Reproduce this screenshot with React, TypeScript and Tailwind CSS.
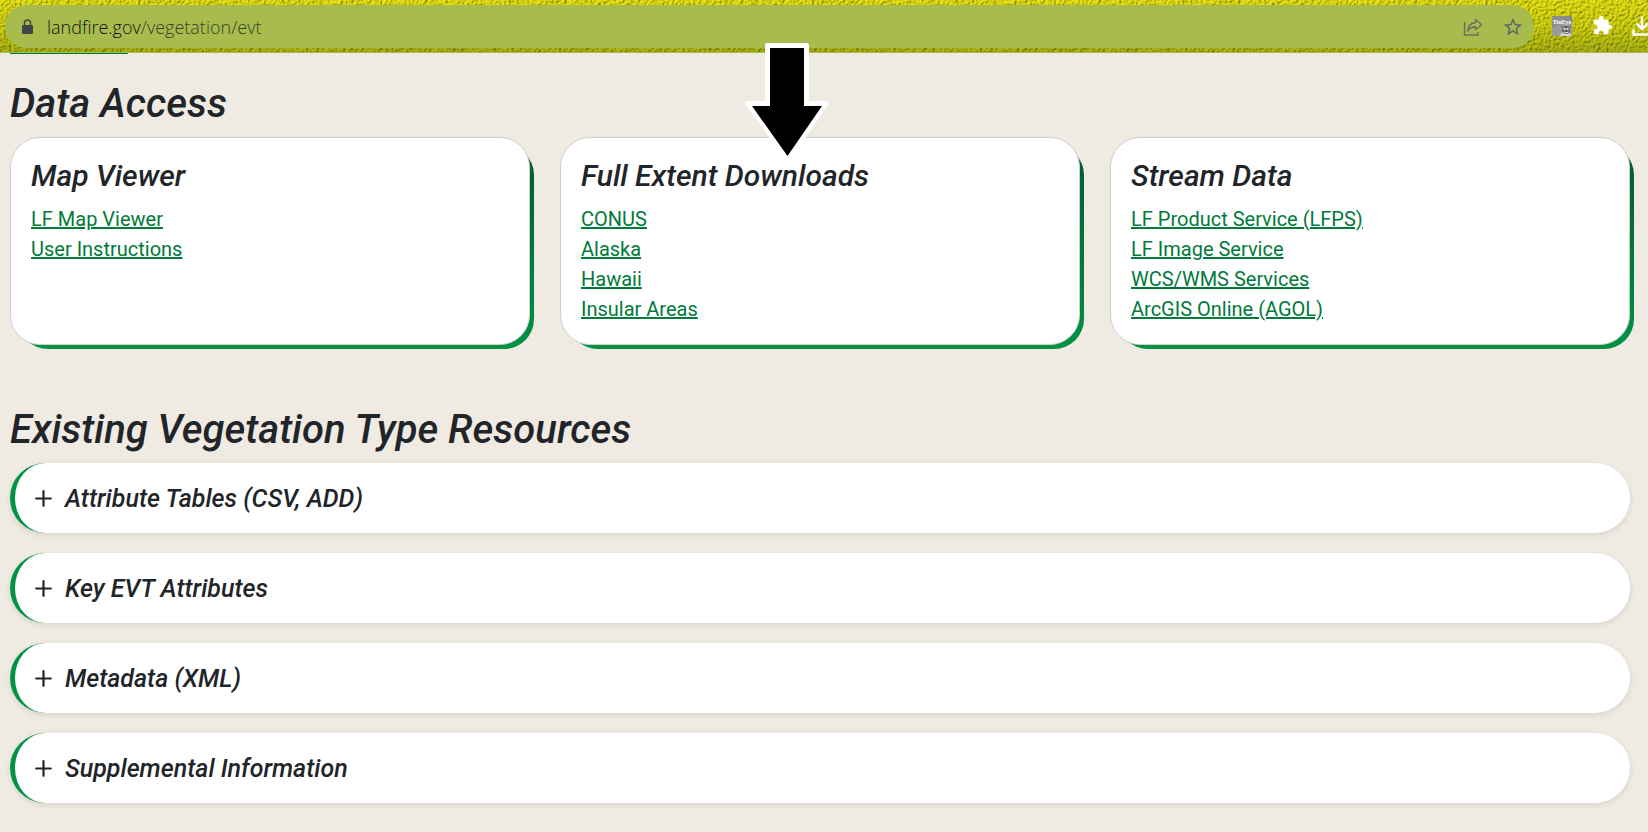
import React from "react";

type LinkCard = { title: string; links: string[] };

const cards: LinkCard[] = [
  { title: "Map Viewer", links: ["LF Map Viewer", "User Instructions"] },
  { title: "Full Extent Downloads", links: ["CONUS", "Alaska", "Hawaii", "Insular Areas"] },
  {
    title: "Stream Data",
    links: ["LF Product Service (LFPS)", "LF Image Service", "WCS/WMS Services", "ArcGIS Online (AGOL)"],
  },
];

const resources = ["Attribute Tables (CSV, ADD)", "Key EVT Attributes", "Metadata (XML)", "Supplemental Information"];

function Texture() {
  return (
    <svg className="absolute inset-0 -z-10 h-full w-full" aria-hidden="true">
      <defs>
        <linearGradient id="shade" x1="0" y1="0" x2="0" y2="1">
          <stop offset="0" stopColor="#e6e314" />
          <stop offset="0.5" stopColor="#d2d40f" />
          <stop offset="1" stopColor="#a9b312" />
        </linearGradient>
        <filter id="grain" x="0" y="0" width="100%" height="100%" colorInterpolationFilters="sRGB">
          <feTurbulence type="fractalNoise" baseFrequency="0.38" numOctaves="2" seed="4" result="n" />
          <feDiffuseLighting in="n" surfaceScale="1.2" diffuseConstant="1.12" lightingColor="#ffffff" result="l">
            <feDistantLight azimuth="225" elevation="56" />
          </feDiffuseLighting>
          <feBlend in="SourceGraphic" in2="l" mode="multiply" />
        </filter>
      </defs>
      <rect width="100%" height="100%" fill="url(#shade)" filter="url(#grain)" />
    </svg>
  );
}

function TinEye() {
  return (
    <svg width="20" height="20" viewBox="0 0 20 20" aria-hidden="true">
      <rect width="20" height="20" fill="#8c8c8c" />
      <path d="M0 12 Q8 7 20 8 V20 H0Z" fill="#9b9b9b" />
      <text x="10" y="8" textAnchor="middle" fontSize="6" fontWeight="700" fill="#ffffff" fontFamily="Liberation Serif, serif">
        TinEye
      </text>
      <path d="M8 20 L9 17 L12 16 L17 17 L20 20Z" fill="#d5d5d5" />
      <ellipse cx="14" cy="14" rx="4" ry="4" fill="#5c5c5c" />
      <circle cx="12.500" cy="13" r="1.300" fill="#d8d8d8" />
      <circle cx="15.600" cy="13" r="1.300" fill="#d8d8d8" />
      <path d="M11.500 16 Q14 18 16.500 16" stroke="#f0f0f0" fill="none" />
      <path d="M10 11 L9 10 M18 11 L19 10" stroke="#444444" />
    </svg>
  );
}

function Toolbar() {
  return (
    <header className="relative isolate flex h-[53px] items-start overflow-hidden border-b border-[#a7bc4d] pt-[5px] pl-[5px]">
      <Texture />
      <div className="flex h-[43px] min-w-0 flex-1 items-center rounded-full bg-[#a7bc4d] pr-[5px] pl-4 text-[#5f6368]">
        <svg width="13" height="16" viewBox="0 0 13 16" className="shrink-0" aria-hidden="true">
          <rect x="1" y="6" width="11" height="9" rx="1" fill="#414449" />
          <path d="M3.500 7V4a3 3 0 0 1 6 0v3" stroke="#414449" strokeWidth="1.500" fill="none" />
        </svg>
        <a
          href="#evt"
          aria-label="Page address"
          className="ml-[13px] min-w-0 flex-1 truncate font-['Open_Sans',sans-serif] text-[18px] leading-6 font-light text-[#3c4128]"
        >
          <span className="text-[#111214]">landfire.gov</span>/vegetation/evt
        </a>
        <button type="button" aria-label="Share this page" className="flex h-8 w-8 items-center justify-center">
          <svg width="20" height="18" viewBox="0 0 20 18" fill="none" stroke="#686d5f" strokeWidth="1.400" aria-hidden="true">
            <path d="M1.500 4v13h13.500v-3" />
            <path d="M12.500 1.500 18.700 6.700 12.500 11.500V8.700C9 8.700 6.300 10 4.800 13 5.200 8 8 4.800 12.500 4.500z" strokeLinejoin="round" />
          </svg>
        </button>
        <button type="button" aria-label="Bookmark this page" className="ml-2 flex h-8 w-8 items-center justify-center">
          <svg width="22" height="22" viewBox="0 0 24 24" fill="#5f6368" aria-hidden="true">
            <path d="M22 9.24l-7.19-.62L12 2 9.19 8.63 2 9.24l5.46 4.73L5.82 21 12 17.27 18.18 21l-1.63-7.03L22 9.24zM12 15.4l-3.76 2.27 1-4.28-3.32-2.88 4.38-.38L12 6.1l1.71 4.04 4.38.38-3.32 2.88 1 4.28L12 15.4z" />
          </svg>
        </button>
      </div>
      <div className="-mr-[10px] ml-3 flex h-[41px] items-center gap-2">
        <button type="button" aria-label="TinEye" className="flex h-8 w-8 items-center justify-center">
          <TinEye />
        </button>
        <button type="button" aria-label="Extensions" className="flex h-8 w-8 items-center justify-center">
          <svg width="21" height="21" viewBox="0 0 24 24" fill="#ffffff" aria-hidden="true">
            <path d="M20.5 11H19V7c0-1.1-.9-2-2-2h-4V3.500a2.500 2.500 0 0 0-5 0V5H4c-1.100 0-1.990.9-1.990 2v3.800H3.500c1.490 0 2.700 1.210 2.700 2.700s-1.210 2.700-2.700 2.700H2V20c0 1.100.9 2 2 2h3.800v-1.500c0-1.490 1.210-2.700 2.700-2.700s2.700 1.210 2.700 2.700V22H17c1.100 0 2-.9 2-2v-4h1.500a2.500 2.500 0 0 0 0-5z" />
          </svg>
        </button>
        <button type="button" aria-label="Downloads" className="flex h-8 w-8 items-center justify-center">
          <svg width="20" height="20" viewBox="0 0 20 20" fill="none" stroke="#ffffff" strokeWidth="2.400" aria-hidden="true">
            <path d="M10 .5v12M4.500 7.500 10 13 15.500 7.500M1.500 13.500v5h17v-5" />
          </svg>
        </button>
      </div>
    </header>
  );
}

function Card({ title, links }: LinkCard) {
  return (
    <article className="relative isolate min-h-52 before:absolute before:top-2 before:-right-1 before:-bottom-1 before:left-2 before:-z-10 before:rounded-[30px] before:bg-linear-to-b before:from-[#005a2b] before:to-[#009344]">
      <div className="h-full min-h-52 rounded-[30px] border border-[#d0d0ce] bg-white px-5 pt-5 pb-4">
        <h3 className="mb-[10px] text-[30px] leading-9 font-medium italic">{title}</h3>
        <ul className="text-[20px] leading-[30px]">
          {links.map((link) => (
            <li key={link}>
              <a href="#evt" className="text-[#007a3a] underline decoration-2">
                {link}
              </a>
            </li>
          ))}
        </ul>
      </div>
    </article>
  );
}

function Resource({ title }: { title: string }) {
  return (
    <button
      type="button"
      aria-expanded="false"
      className="flex h-[70px] w-full items-center gap-[13px] rounded-[35px] border-l-[5px] border-[#009344] bg-white pl-5 text-left shadow-[0_2px_6px_rgba(0,0,0,0.1)]"
    >
      <svg width="17" height="17" viewBox="0 0 17 17" stroke="#212529" strokeWidth="2.200" strokeLinecap="round" aria-hidden="true">
        <path d="M8.500 1.200v14.600M1.200 8.500h14.600" />
      </svg>
      <span className="pt-0.5 text-[25px] leading-8 font-medium italic">{title}</span>
    </button>
  );
}

export default function App() {
  return (
    <div className="relative min-h-screen bg-[#efeae2] font-[Roboto,sans-serif] text-[#212529]">
      <Toolbar />
      <div className="ml-[10px] h-px w-[118px] bg-[#007a3a]" />
      <main id="evt" className="pr-[18px] pl-[10px]">
        <h2 className="pt-[26px] text-[40px] leading-[48px] font-medium italic">Data Access</h2>
        <section className="mt-[9px] grid grid-cols-3 gap-[30px]">
          {cards.map((card) => (
            <Card key={card.title} {...card} />
          ))}
        </section>
        <h2 className="pt-[61px] text-[40px] leading-[48px] font-medium italic">Existing Vegetation Type Resources</h2>
        <section className="mt-[9px] flex flex-col gap-5">
          {resources.map((title) => (
            <Resource key={title} title={title} />
          ))}
        </section>
      </main>
      <svg className="absolute top-[42px] left-[745px]" width="84" height="124" viewBox="0 0 84 124" aria-hidden="true">
        <path d="M20 3Q20 1 22 1H62Q64 1 64 3V59H82Q85 60 83 63L43 121 1 63Q-1 60 2 59H20Z" fill="#ffffff" />
        <path d="M25 6H59V64H77L42.500 114 7 64H25Z" fill="#000000" />
      </svg>
    </div>
  );
}
